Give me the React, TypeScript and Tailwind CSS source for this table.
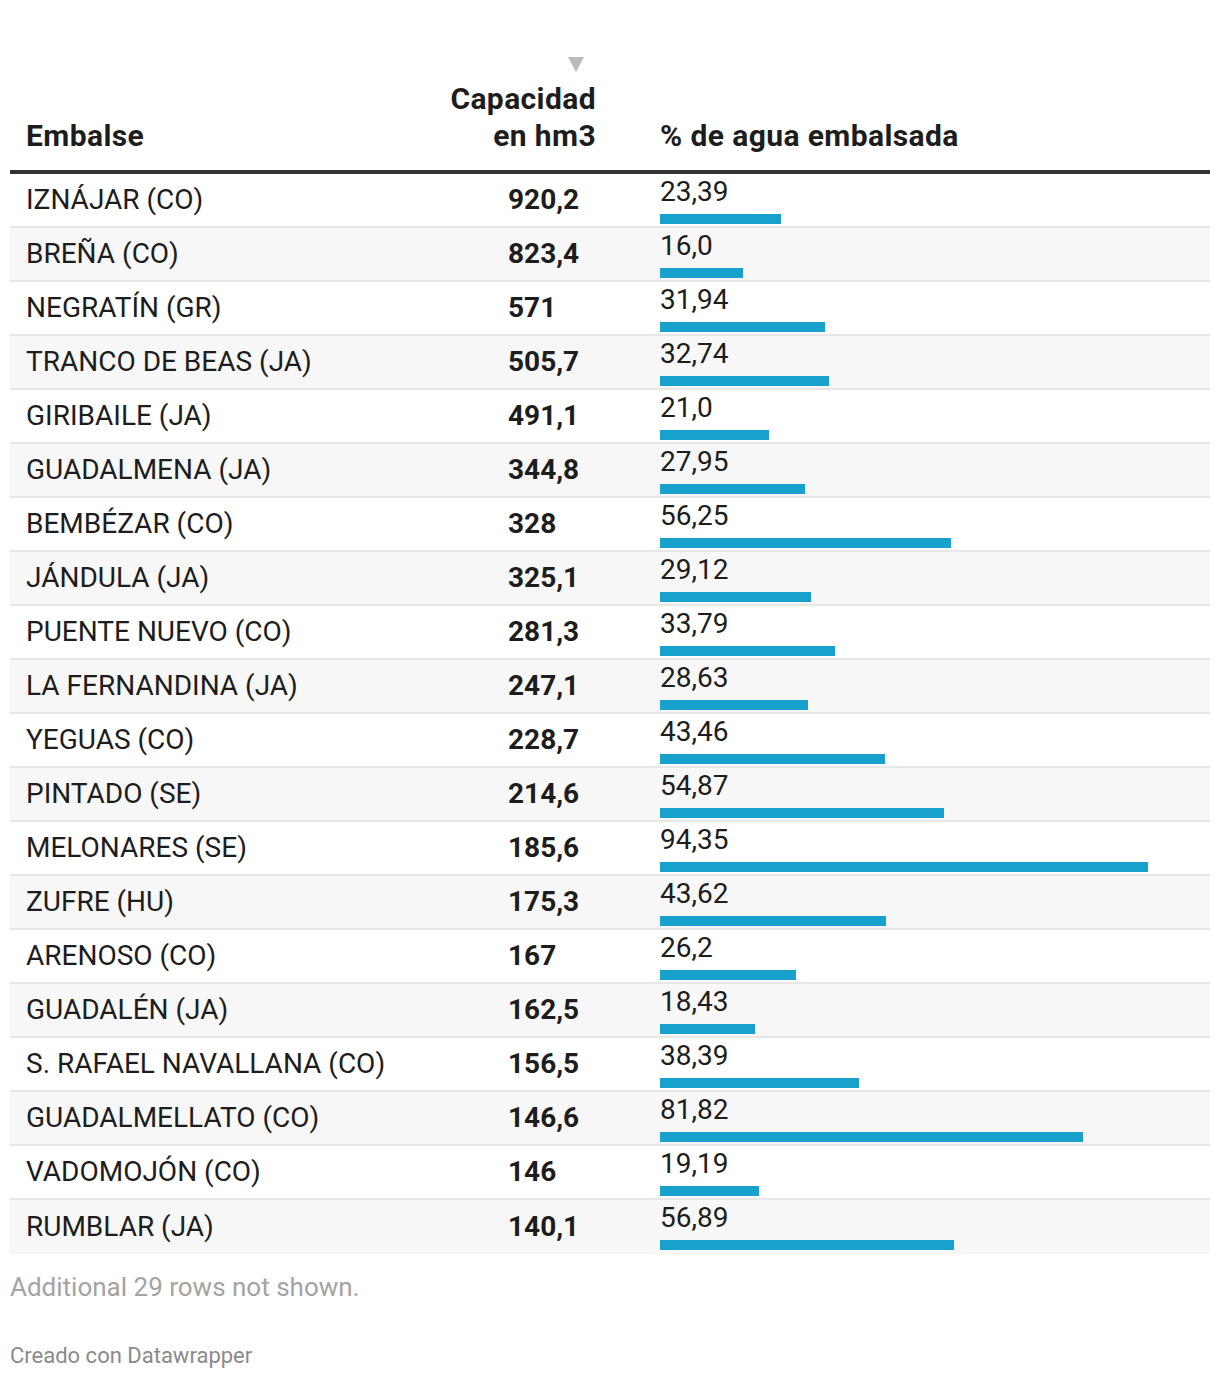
import React from "react";

const rows = [
  { name: "IZNÁJAR (CO)", cap: "920,2", pct: 23.39, label: "23,39" },
  { name: "BREÑA (CO)", cap: "823,4", pct: 16.0, label: "16,0" },
  { name: "NEGRATÍN (GR)", cap: "571", pct: 31.94, label: "31,94" },
  { name: "TRANCO DE BEAS (JA)", cap: "505,7", pct: 32.74, label: "32,74" },
  { name: "GIRIBAILE (JA)", cap: "491,1", pct: 21.0, label: "21,0" },
  { name: "GUADALMENA (JA)", cap: "344,8", pct: 27.95, label: "27,95" },
  { name: "BEMBÉZAR (CO)", cap: "328", pct: 56.25, label: "56,25" },
  { name: "JÁNDULA (JA)", cap: "325,1", pct: 29.12, label: "29,12" },
  { name: "PUENTE NUEVO (CO)", cap: "281,3", pct: 33.79, label: "33,79" },
  { name: "LA FERNANDINA (JA)", cap: "247,1", pct: 28.63, label: "28,63" },
  { name: "YEGUAS (CO)", cap: "228,7", pct: 43.46, label: "43,46" },
  { name: "PINTADO (SE)", cap: "214,6", pct: 54.87, label: "54,87" },
  { name: "MELONARES (SE)", cap: "185,6", pct: 94.35, label: "94,35" },
  { name: "ZUFRE (HU)", cap: "175,3", pct: 43.62, label: "43,62" },
  { name: "ARENOSO (CO)", cap: "167", pct: 26.2, label: "26,2" },
  { name: "GUADALÉN (JA)", cap: "162,5", pct: 18.43, label: "18,43" },
  { name: "S. RAFAEL NAVALLANA (CO)", cap: "156,5", pct: 38.39, label: "38,39" },
  { name: "GUADALMELLATO (CO)", cap: "146,6", pct: 81.82, label: "81,82" },
  { name: "VADOMOJÓN (CO)", cap: "146", pct: 19.19, label: "19,19" },
  { name: "RUMBLAR (JA)", cap: "140,1", pct: 56.89, label: "56,89" },
];

export default function App() {
  return (
    <div className="bg-white px-[10px] pt-[57px] pb-[20px] text-[#1d1d1d] font-['Roboto',sans-serif]">
      {/* Header */}
      <div className="flex items-end border-b-4 border-[#333333] pb-[16px] text-[30px] font-bold leading-[37px] tracking-[0.4px]">
        <div className="w-[420px] pl-[16px]">Embalse</div>
        <div className="w-[170px] pr-[4px] text-right flex flex-col items-end">
          <svg width="16" height="15" viewBox="0 0 16 15" className="mb-[8px] mr-[12px]">
            <polygon points="0,0 16,0 8,15" fill="#bbbbbb" />
          </svg>
          <span>Capacidad</span>
          <span>en hm3</span>
        </div>
        <div className="flex-1 pl-[60px]">% de agua embalsada</div>
      </div>

      {/* Rows */}
      <div>
        {rows.map((r, i) => (
          <div
            key={r.name}
            className={`flex h-[54px] text-[28px] ${i % 2 === 1 ? "bg-[#f7f7f7]" : "bg-white"} ${i < rows.length - 1 ? "border-b-2 border-[#e6e6e6]" : ""}`}
          >
            <div className="w-[420px] pl-[16px] flex items-center">{r.name}</div>
            <div className="w-[170px] pl-[78px] flex items-center font-bold">{r.cap}</div>
            <div className="flex-1 pl-[60px] flex flex-col pt-[4px]">
              <span className="leading-[28px]">{r.label}</span>
              <div className="mt-[8px] h-[10px] bg-[#18a1cd]" style={{ width: `${r.pct * 5.172}px` }} />
            </div>
          </div>
        ))}
      </div>

      {/* Footer */}
      <div className="mt-[18px] text-[26px] leading-[30px] text-[#a3a3a3]">Additional 29 rows not shown.</div>
      <div className="mt-[41px] text-[22px] leading-[26px] text-[#8a8a8a]">Creado con Datawrapper</div>
    </div>
  );
}
